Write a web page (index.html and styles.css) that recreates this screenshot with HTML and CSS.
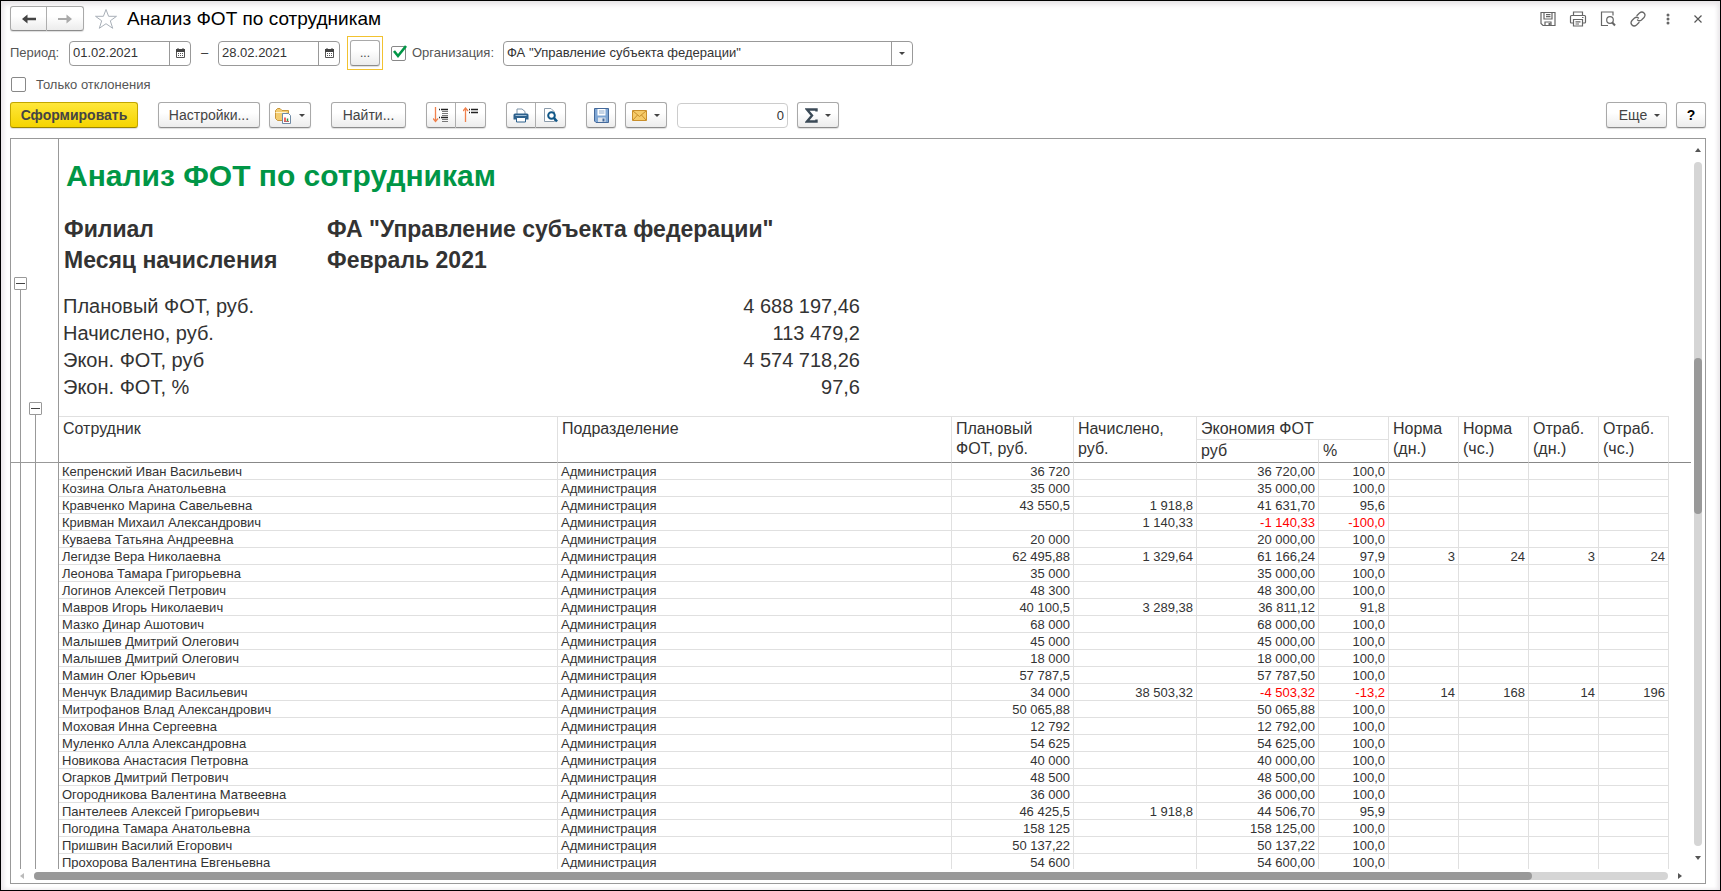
FILE: index.html
```html
<!DOCTYPE html>
<html lang="ru">
<head>
<meta charset="utf-8">
<title>Анализ ФОТ по сотрудникам</title>
<link rel="stylesheet" href="styles.css">
</head>
<body>
<main class="window">
  <header class="titlebar">
    <div class="btn-group">
      <button class="btn nav" type="button" aria-label="Назад"><svg width="16" height="12" viewBox="0 0 16 12"><path d="M1 6 6.500 1.500V4.800H15V7.200H6.500V10.500Z" fill="#444"/></svg></button>
      <button class="btn nav" type="button" aria-label="Вперед"><svg width="16" height="12" viewBox="0 0 16 12"><path d="M15 6 9.500 1.500V5H1V7H9.500V10.500Z" fill="#aaa"/></svg></button>
    </div>
    <button class="star" type="button" aria-label="В избранное"><svg width="24" height="22" viewBox="0 0 24 22"><path d="M12 1.500 14.600 8.300H22.500L16.300 12.800 18.700 20.300 12 15.700 5.300 20.300 7.700 12.800 1.500 8.300H9.400Z" fill="#fff" stroke="#a9b0b8" stroke-width="1"/></svg></button>
    <h1 class="title">Анализ ФОТ по сотрудникам</h1>
    <div class="tools">
      <button class="tool" type="button" aria-label="Сохранить"><svg width="16" height="16" viewBox="0 0 16 16" fill="none" stroke="#666" stroke-width="1.200"><path d="M1 1.500H15V14.500H3L1 12.500Z"/><path d="M4 1.500V8H12V1.500M6 3.700H10.500M6 5.700H10.500M5 14.500V11H11V14.500"/><path d="M8.500 12H10.500V14H8.500Z" fill="#666" stroke="none"/></svg></button>
      <button class="tool" type="button" aria-label="Печать"><svg width="18" height="16" viewBox="0 0 18 16" fill="none" stroke="#666" stroke-width="1.200"><path d="M4.500 4.500V1H13.500V4.500M4.500 12H2.500Q1.500 12 1.500 11V5.500Q1.500 4.500 2.500 4.500H15.500Q16.500 4.500 16.500 5.500V11Q16.500 12 15.500 12H13.500M4.500 8.500H13.500V15H4.500ZM6.500 10.800H11.500M6.500 13H10M13 6.500H14.500"/></svg></button>
      <button class="tool" type="button" aria-label="Предварительный просмотр"><svg width="16" height="16" viewBox="0 0 16 16" fill="none" stroke="#666" stroke-width="1.200"><path d="M8 14.500H1.500V1H13V4.500"/><circle cx="10" cy="9" r="3.300"/><path d="M12 11.300 15 14.500" stroke-width="2"/></svg></button>
      <button class="tool" type="button" aria-label="Ссылка"><svg width="16" height="16" viewBox="0 0 16 16" fill="none" stroke="#666" stroke-width="1.300" stroke-linecap="round"><path d="M7 4.500 9.500 2Q12 0 14 2T14 6.500L11.500 9Q9.500 10.500 7.500 9M9 11.500 6.500 14Q4 16 2 14T2 9.500L4.500 7Q6.500 5.500 8.500 7"/></svg></button>
      <button class="tool" type="button" aria-label="Меню"><svg width="4" height="14" viewBox="0 0 4 14" fill="#666"><circle cx="2" cy="3" r="1.500"/><circle cx="2" cy="7" r="1.500"/><circle cx="2" cy="11" r="1.500"/></svg></button>
      <button class="tool" type="button" aria-label="Закрыть"><svg width="8" height="8" viewBox="0 0 8 8" stroke="#555" stroke-width="1.200"><path d="M.5 .5 7.500 7.500M7.500 .5 .5 7.500"/></svg></button>
    </div>
  </header>

  <form class="filters">
    <div class="filter-row">
      <label class="label period" for="from">Период:</label>
      <div class="field date">
        <input id="from" type="text" value="01.02.2021">
        <button type="button" aria-label="Календарь"><svg width="11" height="11" viewBox="0 0 11 11"><path d="M1.500 1.500H9.500V9.500H1.500Z" fill="#fff" stroke="#555"/><path d="M1 1H10V4H1Z" fill="#444"/><path d="M3 0V2M8 0V2" stroke="#444"/><path d="M3 5.500H8.500M3 7.500H8.500" stroke="#555" stroke-dasharray="1 1"/></svg></button>
      </div>
      <span class="dash">–</span>
      <div class="field date">
        <input type="text" value="28.02.2021" aria-label="Конец периода">
        <button type="button" aria-label="Календарь"><svg width="11" height="11" viewBox="0 0 11 11"><path d="M1.500 1.500H9.500V9.500H1.500Z" fill="#fff" stroke="#555"/><path d="M1 1H10V4H1Z" fill="#444"/><path d="M3 0V2M8 0V2" stroke="#444"/><path d="M3 5.500H8.500M3 7.500H8.500" stroke="#555" stroke-dasharray="1 1"/></svg></button>
      </div>
      <div class="focus"><button class="btn dots" type="button">...</button></div>
      <span class="check">
        <input id="org-on" type="checkbox" checked>
        <svg class="tick" width="16" height="14" viewBox="0 0 16 14"><path d="M2 6 6 11 14 1" fill="none" stroke="#009646" stroke-width="2.600"/></svg>
      </span>
      <label class="label org-label" for="org-on">Организация:</label>
      <div class="field org">
        <select aria-label="Организация"><option>ФА "Управление субъекта федерации"</option></select>
        <span class="drop"><i class="caret"></i></span>
      </div>
    </div>
    <div class="filter-row second">
      <span class="check"><input id="dev" type="checkbox"></span>
      <label class="label" for="dev">Только отклонения</label>
    </div>
  </form>

  <div class="toolbar">
    <button class="btn primary" type="button">Сформировать</button>
    <button class="btn settings" type="button">Настройки...</button>
    <button class="btn menu" type="button" aria-label="Варианты отчета"><svg width="17" height="17" viewBox="0 0 17 17"><path d="M.5 3.500 2.500 1.500H5L7 3.500H13.500V13.500H2.500L.5 11.500Z" fill="#f3cd72" stroke="#c9963a"/><path d="M.5 5.500H11.500" stroke="#fff3cf"/><path d="M7.500 6.500H13.500L15.500 8.500V16.500H7.500Z" fill="#fff" stroke="#6f8aa5"/><path d="M10 14V10.500" stroke="#e33" stroke-width="1.500"/><path d="M12.500 14V11.500" stroke="#2a9b4a" stroke-width="1.500"/><path d="M9 14.500H14" stroke="#b66"/></svg><i class="caret"></i></button>
    <button class="btn find" type="button">Найти...</button>
    <div class="btn-group outline">
      <button class="btn icon" type="button" aria-label="Развернуть группы"><svg width="16" height="16" viewBox="0 0 16 16" fill="none"><path d="M2.500 0V14M0 11.500 2.500 14.500 5 11.500" stroke="#f0804c" stroke-width="1.300"/><path d="M6 2.500H7M8 2.500H15M6 10.500H7M8 10.500H15" stroke="#222" stroke-width="1.300"/><path d="M9 4.500H15M9 6.500H15M9 8.500H15M9 12.500H15M9 14.500H15" stroke="#777"/></svg></button>
      <button class="btn icon" type="button" aria-label="Свернуть группы"><svg width="16" height="16" viewBox="0 0 16 16" fill="none"><path d="M2.500 15V1M0 4 2.500 1 5 4" stroke="#f0804c" stroke-width="1.300"/><path d="M6 2.500H7M8 2.500H15M6 5.500H7M8 5.500H15" stroke="#222" stroke-width="1.300"/></svg></button>
    </div>
    <div class="btn-group print">
      <button class="btn icon" type="button" aria-label="Печать"><svg width="16" height="15" viewBox="0 0 16 15"><path d="M4 6V1H9L12 3.500V6" fill="#fff" stroke="#7d93a8"/><path d="M2 5.500H14Q15.500 5.500 15.500 7V11.500H.5V7Q.5 5.500 2 5.500Z" fill="#2c608c"/><path d="M2.500 7.500H13.500" stroke="#9dbcd6"/><path d="M3.500 9.500H12.500V14H3.500Z" fill="#fff" stroke="#2c608c"/></svg></button>
      <button class="btn icon" type="button" aria-label="Просмотр"><svg width="16" height="16" viewBox="0 0 16 16"><path d="M1.500 14.500V1.500H8L11.500 5V14.500Z" fill="#fff" stroke="#8a9bab"/><circle cx="8.500" cy="8.500" r="3.300" fill="#fff" stroke="#0f5687" stroke-width="2"/><path d="M11 11 14 14.500" stroke="#0f5687" stroke-width="2.600"/></svg></button>
    </div>
    <button class="btn save" type="button" aria-label="Сохранить"><svg width="15" height="15" viewBox="0 0 15 15"><path d="M.5 .5H14.500V14.500H2L.5 13Z" fill="#7ea6d4" stroke="#44699a"/><path d="M3.500 1H11.500V7.500H3.500Z" fill="#fff"/><path d="M5 3H10.500M5 5H10.500" stroke="#8aa9cc"/><path d="M4 9.500H11.500V14H4Z" fill="#dfe6ee"/><path d="M8.500 10.500H10.500V13.500H8.500Z" fill="#44699a"/></svg></button>
    <button class="btn menu mail" type="button" aria-label="Отправить"><svg width="15" height="11" viewBox="0 0 15 11"><path d="M.5 .5H14.500V10.500H.5Z" fill="#f6cb69" stroke="#c98f2b"/><path d="M1 1 7.500 6.500 14 1M1 10 5.500 5M14 10 9.500 5" fill="none" stroke="#c98f2b"/></svg><i class="caret"></i></button>
    <input class="sum" type="text" value="0" aria-label="Сумма">
    <button class="btn menu" type="button" aria-label="Функция"><svg width="13" height="15" viewBox="0 0 13 15"><path d="M11.500 3.500V1.500H2L7 7.500 2 13.500H11.500V11.500" fill="none" stroke="#3b4a57" stroke-width="2.400"/></svg><i class="caret"></i></button>
    <button class="btn more" type="button">Еще<i class="caret"></i></button>
    <button class="btn help" type="button">?</button>
  </div>

  <section class="panel">
    <div class="gutter">
      <div class="gutter-head">
        <div class="branch outer"><button class="fold" type="button" aria-label="Свернуть"></button><i class="stem"></i></div>
        <div class="branch inner"><button class="fold" type="button" aria-label="Свернуть"></button><i class="stem"></i></div>
      </div>
      <div class="gutter-body">
        <div class="branch"><i class="stem"></i></div>
        <div class="branch"><i class="stem"></i></div>
      </div>
    </div>
    <div class="sheet">
      <h2 class="report-title">Анализ ФОТ по сотрудникам</h2>
      <dl class="criteria">
        <dt>Филиал</dt><dd>ФА "Управление субъекта федерации"</dd>
        <dt>Месяц начисления</dt><dd>Февраль 2021</dd>
      </dl>
      <dl class="totals">
        <dt>Плановый ФОТ, руб.</dt><dd>4 688 197,46</dd>
        <dt>Начислено, руб.</dt><dd>113 479,2</dd>
        <dt>Экон. ФОТ, руб</dt><dd>4 574 718,26</dd>
        <dt>Экон. ФОТ, %</dt><dd>97,6</dd>
      </dl>
      <table class="report">
        <colgroup><col class="c-name"><col><col class="c-plan"><col class="c-accr"><col class="c-plan"><col class="c-small"><col class="c-small"><col class="c-small"><col class="c-small"><col class="c-small"><col class="c-tail"></colgroup>
        <thead>
          <tr><th rowspan="2">Сотрудник</th><th rowspan="2">Подразделение</th><th rowspan="2">Плановый ФОТ, руб.</th><th rowspan="2">Начислено, руб.</th><th class="group" colspan="2">Экономия ФОТ</th><th rowspan="2">Норма (дн.)</th><th rowspan="2">Норма (чс.)</th><th rowspan="2">Отраб. (дн.)</th><th rowspan="2">Отраб. (чс.)</th><td class="tail" rowspan="2"></td></tr>
          <tr><th>руб</th><th>%</th></tr>
        </thead>
        <tbody>
          <tr><td>Кепренский Иван Васильевич</td><td>Администрация</td><td>36 720</td><td></td><td>36 720,00</td><td>100,0</td><td></td><td></td><td></td><td></td></tr>
          <tr><td>Козина Ольга Анатольевна</td><td>Администрация</td><td>35 000</td><td></td><td>35 000,00</td><td>100,0</td><td></td><td></td><td></td><td></td></tr>
          <tr><td>Кравченко Марина Савельевна</td><td>Администрация</td><td>43 550,5</td><td>1 918,8</td><td>41 631,70</td><td>95,6</td><td></td><td></td><td></td><td></td></tr>
          <tr><td>Кривман Михаил Александрович</td><td>Администрация</td><td></td><td>1 140,33</td><td class="neg">-1 140,33</td><td class="neg">-100,0</td><td></td><td></td><td></td><td></td></tr>
          <tr><td>Куваева Татьяна Андреевна</td><td>Администрация</td><td>20 000</td><td></td><td>20 000,00</td><td>100,0</td><td></td><td></td><td></td><td></td></tr>
          <tr><td>Легидзе Вера Николаевна</td><td>Администрация</td><td>62 495,88</td><td>1 329,64</td><td>61 166,24</td><td>97,9</td><td>3</td><td>24</td><td>3</td><td>24</td></tr>
          <tr><td>Леонова Тамара Григорьевна</td><td>Администрация</td><td>35 000</td><td></td><td>35 000,00</td><td>100,0</td><td></td><td></td><td></td><td></td></tr>
          <tr><td>Логинов Алексей Петрович</td><td>Администрация</td><td>48 300</td><td></td><td>48 300,00</td><td>100,0</td><td></td><td></td><td></td><td></td></tr>
          <tr><td>Мавров Игорь Николаевич</td><td>Администрация</td><td>40 100,5</td><td>3 289,38</td><td>36 811,12</td><td>91,8</td><td></td><td></td><td></td><td></td></tr>
          <tr><td>Мазко Динар Ашотович</td><td>Администрация</td><td>68 000</td><td></td><td>68 000,00</td><td>100,0</td><td></td><td></td><td></td><td></td></tr>
          <tr><td>Малышев Дмитрий Олегович</td><td>Администрация</td><td>45 000</td><td></td><td>45 000,00</td><td>100,0</td><td></td><td></td><td></td><td></td></tr>
          <tr><td>Малышев Дмитрий Олегович</td><td>Администрация</td><td>18 000</td><td></td><td>18 000,00</td><td>100,0</td><td></td><td></td><td></td><td></td></tr>
          <tr><td>Мамин Олег Юрьевич</td><td>Администрация</td><td>57 787,5</td><td></td><td>57 787,50</td><td>100,0</td><td></td><td></td><td></td><td></td></tr>
          <tr><td>Менчук Владимир Васильевич</td><td>Администрация</td><td>34 000</td><td>38 503,32</td><td class="neg">-4 503,32</td><td class="neg">-13,2</td><td>14</td><td>168</td><td>14</td><td>196</td></tr>
          <tr><td>Митрофанов Влад Александрович</td><td>Администрация</td><td>50 065,88</td><td></td><td>50 065,88</td><td>100,0</td><td></td><td></td><td></td><td></td></tr>
          <tr><td>Моховая Инна Сергеевна</td><td>Администрация</td><td>12 792</td><td></td><td>12 792,00</td><td>100,0</td><td></td><td></td><td></td><td></td></tr>
          <tr><td>Муленко Алла Александровна</td><td>Администрация</td><td>54 625</td><td></td><td>54 625,00</td><td>100,0</td><td></td><td></td><td></td><td></td></tr>
          <tr><td>Новикова Анастасия Петровна</td><td>Администрация</td><td>40 000</td><td></td><td>40 000,00</td><td>100,0</td><td></td><td></td><td></td><td></td></tr>
          <tr><td>Огарков Дмитрий Петрович</td><td>Администрация</td><td>48 500</td><td></td><td>48 500,00</td><td>100,0</td><td></td><td></td><td></td><td></td></tr>
          <tr><td>Огородникова Валентина Матвеевна</td><td>Администрация</td><td>36 000</td><td></td><td>36 000,00</td><td>100,0</td><td></td><td></td><td></td><td></td></tr>
          <tr><td>Пантелеев Алексей Григорьевич</td><td>Администрация</td><td>46 425,5</td><td>1 918,8</td><td>44 506,70</td><td>95,9</td><td></td><td></td><td></td><td></td></tr>
          <tr><td>Погодина Тамара Анатольевна</td><td>Администрация</td><td>158 125</td><td></td><td>158 125,00</td><td>100,0</td><td></td><td></td><td></td><td></td></tr>
          <tr><td>Пришвин Василий Егорович</td><td>Администрация</td><td>50 137,22</td><td></td><td>50 137,22</td><td>100,0</td><td></td><td></td><td></td><td></td></tr>
          <tr><td>Прохорова Валентина Евгеньевна</td><td>Администрация</td><td>54 600</td><td></td><td>54 600,00</td><td>100,0</td><td></td><td></td><td></td><td></td></tr>
        </tbody>
      </table>
    </div>
    <div class="vscroll"><i class="arrow up"></i><div class="track"><div class="thumb"></div></div><i class="arrow down"></i></div>
    <div class="hscroll"><i class="arrow left"></i><div class="track"><div class="thumb"></div><div class="rest"></div></div><i class="arrow right"></i></div>
  </section>
</main>
</body>
</html>
```
FILE: styles.css
```css
* { box-sizing: border-box; }

body {
  margin: 0;
  font: 13px/16px "Liberation Sans", Arial, sans-serif;
  color: #333;
}

button, input, select { font: inherit; color: inherit; margin: 0; }
svg { display: block; flex: none; }

.window {
  display: flex;
  flex-direction: column;
  height: 100vh;
  border: 1px solid #000;
  background: #fff;
  box-shadow: inset 0 3px 6px #e4e1e4, inset -2px 0 4px #efedef, inset 3px 0 4px #f3f1f3;
}

/* Buttons */
.btn {
  display: flex;
  align-items: center;
  justify-content: center;
  height: 26px;
  padding: 0;
  border: 1px solid #a9a9a9;
  border-bottom-color: #8c8c8c;
  border-radius: 3px;
  background: linear-gradient(#fff 40%, #ececec);
  box-shadow: 0 1px 1px #ddd;
  font-size: 14px;
  color: #444;
}
.btn-group { display: flex; }
.btn-group .btn:first-child { border-radius: 3px 0 0 3px; }
.btn-group .btn:last-child { border-left: 0; border-radius: 0 3px 3px 0; }
.caret {
  border: 3px solid transparent;
  border-top-color: #444;
  border-bottom: 0;
}

/* Title bar */
.titlebar {
  display: flex;
  align-items: center;
  height: 35px;
  padding: 0 7px 0 9px;
}
.nav { width: 37px; height: 25px; }
.star { margin-left: 10px; padding: 0; border: 0; background: none; }
.title { margin: 0 0 0 9px; font-size: 19px; line-height: 22px; font-weight: 400; color: #000; }
.tools { display: flex; margin-left: auto; }
.tool {
  display: flex;
  align-items: center;
  justify-content: center;
  width: 30px;
  height: 24px;
  padding: 0;
  border: 0;
  background: none;
}

/* Filters */
.filters { padding: 0 15px 0 9px; }
.filter-row { display: flex; align-items: center; height: 34px; }
.filter-row.second { height: 29px; padding-left: 1px; }
.label { color: #555; }
.period { width: 59px; }
.field {
  display: flex;
  height: 25px;
  border: 1px solid #999;
  border-radius: 4px;
  background: #fff;
  overflow: hidden;
}
.field input, .field select {
  flex: 1;
  min-width: 0;
  padding: 0 3px;
  border: 0;
  outline: 0;
  background: none;
  appearance: none;
}
.field button, .drop {
  display: flex;
  align-items: center;
  justify-content: center;
  width: 21px;
  padding: 0;
  border: 0;
  border-left: 1px solid #999;
  background: none;
}
.date { width: 122px; }
.dash { width: 27px; text-align: center; }
.focus { margin-left: 7px; padding: 3px 2px; border: 1px solid #f2c230; }
.dots { width: 30px; font-size: 12px; }
.check { position: relative; display: flex; margin-right: 10px; }
.focus + .check { margin: 0 6px 0 8px; }
.check input {
  width: 15px;
  height: 15px;
  border: 1px solid #888;
  border-radius: 2px;
  background: #fff;
  appearance: none;
}
.tick { position: absolute; left: 1px; top: -1px; pointer-events: none; }
.org-label { width: 91px; }
.org { width: 410px; }

/* Toolbar */
.toolbar {
  display: flex;
  align-items: center;
  padding: 3px 14px 10px 9px;
}
.primary {
  width: 128px;
  border-color: #c2a600;
  border-bottom-color: #9b8500;
  background: linear-gradient(#ffe73a, #f5d400);
  font-weight: 700;
}
.settings { width: 102px; margin-left: 20px; }
.menu { width: 42px; gap: 7px; margin-left: 9px; }
.find { width: 75px; margin-left: 20px; }
.icon { width: 30px; }
.outline { margin-left: 20px; }
.print { margin: 0 20px; }
.save { width: 30px; }
.sum {
  width: 111px;
  height: 25px;
  margin-left: 10px;
  padding: 0 3px;
  border: 1px solid #ccc;
  border-radius: 4px;
  text-align: right;
}
.more { width: 61px; gap: 7px; padding-left: 6px; margin-left: auto; }
.help { width: 30px; margin-left: 9px; font-weight: 700; color: #000; }

/* Report panel */
.panel {
  display: grid;
  grid-template: minmax(0, 1fr) 14px / 48px minmax(0, 1fr) 14px;
  flex: 1;
  min-height: 0;
  margin: 0 14px 6px 9px;
  border: 1px solid #999;
  background: #fff;
}
.gutter { display: flex; flex-direction: column; border-right: 1px solid #999; }
.gutter-head, .gutter-body { display: flex; gap: 2px; padding-left: 3px; }
.gutter-head { height: 324px; border-bottom: 1px solid #999; }
.gutter-body { flex: 1; }
.branch { display: flex; flex-direction: column; align-items: center; width: 13px; }
.outer { padding-top: 138px; }
.inner { padding-top: 263px; }
.fold {
  display: flex;
  align-items: center;
  justify-content: center;
  flex: none;
  width: 13px;
  height: 13px;
  padding: 0;
  border: 1px solid #999;
  border-radius: 1px;
  background: #fff;
}
.fold::before { content: ""; width: 9px; height: 1px; background: #444; }
.stem { flex: 1; width: 1px; background: #999; }

.sheet { overflow: hidden; }
.report-title {
  margin: 19px 0 20px 7px;
  font-size: 30px;
  line-height: 36px;
  color: #009646;
}
.criteria, .totals { display: grid; margin: 0; padding-left: 5px; }
.criteria { grid-template-columns: 263px 1fr; font-size: 23px; line-height: 31px; font-weight: 700; }
.totals {
  grid-template-columns: 264px 533px;
  margin: 17px 0 15px;
  padding-left: 4px;
  font-size: 20px;
  line-height: 27px;
}
.criteria dd, .totals dd { margin: 0; }
.totals dd { text-align: right; }

.report { width: 100%; table-layout: fixed; border-spacing: 0; border-collapse: separate; }
.c-name { width: 499px; }
.c-plan { width: 122px; }
.c-accr { width: 123px; }
.c-small { width: 70px; }
.c-tail { width: 22px; }
.report th {
  height: 23px;
  padding: 1px 4px 0;
  border-right: 1px solid #e0e0e0;
  border-bottom: 1px solid #888;
  font-size: 16px;
  line-height: 20px;
  font-weight: 400;
  text-align: left;
  vertical-align: top;
}
.report thead tr:first-child th { border-top: 1px solid #e0e0e0; padding-top: 2px; }
.report thead tr:first-child .group { height: 24px; border-bottom-color: #e0e0e0; }
.report td {
  height: 17px;
  padding: 2px 3px 0;
  border-right: 1px solid #e0e0e0;
  border-bottom: 1px solid #e0e0e0;
  line-height: 14px;
  text-align: right;
  white-space: nowrap;
}
.report td:nth-child(-n+2) { text-align: left; }
.report .tail { border-right: 0; border-bottom-color: #888; }
.report .neg { color: #f00; }

/* Scroll bars */
.arrow { border: 3px solid transparent; }
.up { border-bottom: 4px solid #555; border-top: 0; }
.down { border-top: 4px solid #555; border-bottom: 0; }
.left { border-right: 4px solid #bbb; border-left: 0; }
.right { border-left: 4px solid #555; border-right: 0; }
.track { display: flex; flex: 1; border-radius: 4px; background: #d5d5d5; }
.thumb { border-radius: 4px; background: #999; }
.vscroll {
  display: flex;
  flex-direction: column;
  align-items: center;
  gap: 10px;
  padding: 9px 0;
}
.vscroll .track { width: 8px; flex-direction: column; padding-top: 196px; }
.vscroll .thumb { height: 156px; }
.hscroll {
  display: flex;
  grid-column: 1 / 3;
  align-items: center;
  gap: 10px;
  padding: 0 9px;
}
.hscroll .track { height: 8px; }
.hscroll .thumb { flex: 11; }
.hscroll .rest { flex: 1; }
```
